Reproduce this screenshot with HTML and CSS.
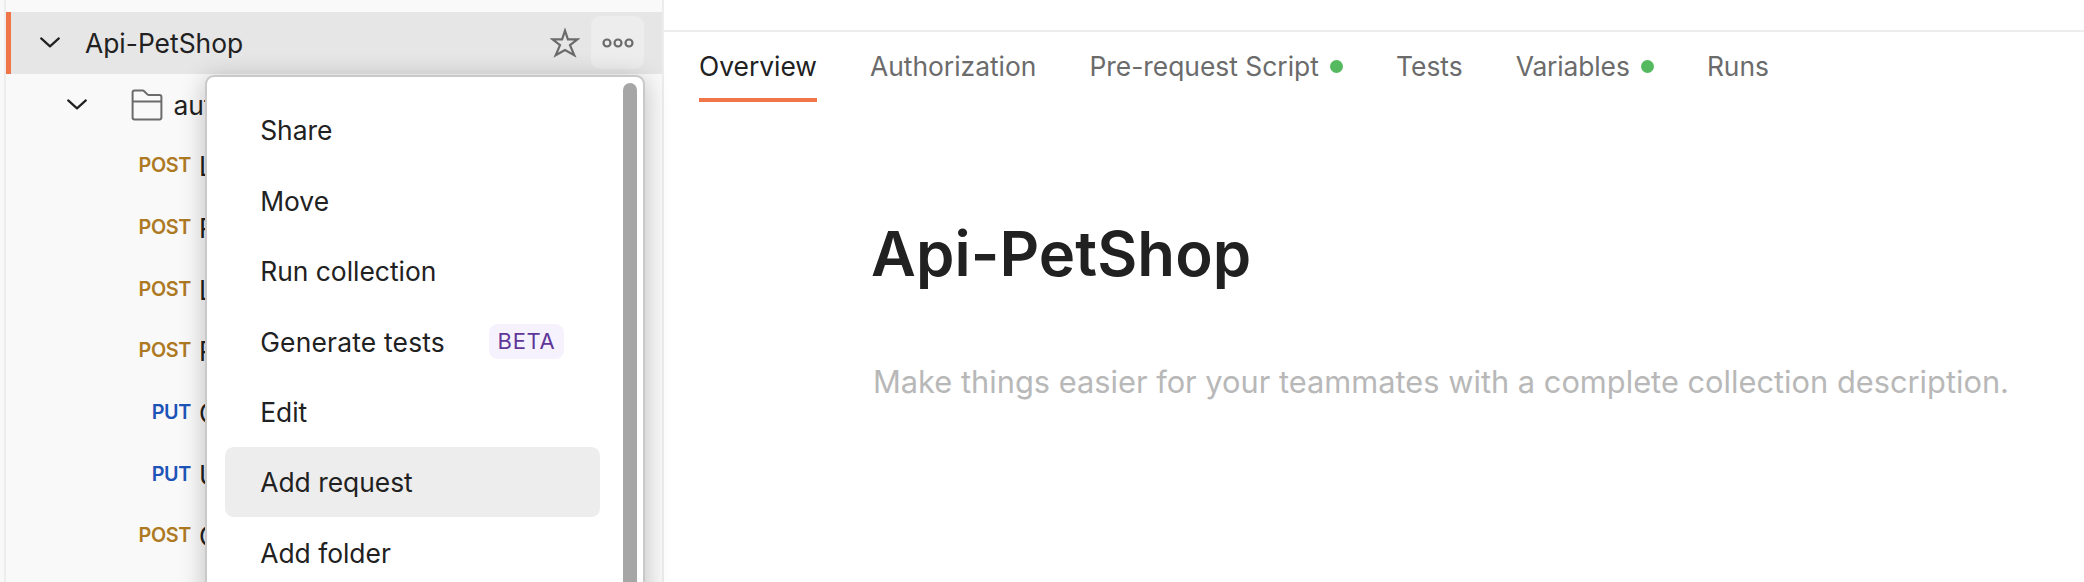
FILE: index.html
```html
<!DOCTYPE html>
<html lang="en">
<head>
<meta charset="utf-8">
<title>Api-PetShop</title>
<link rel="stylesheet" href="styles.css">
</head>
<body>
<div class="app">
  <aside class="sidebar">
    <div class="row row-collection">
      <svg class="chevron" width="20" height="12" viewBox="0 0 20 12"><path d="M1.2 1.4 10 9.4 18.8 1.4"/></svg>
      <span class="name">Api-PetShop</span>
      <svg class="star" width="30" height="30" viewBox="0 0 30 30"><path d="M15 2.6 17.9 11.4H27.4L20 17.1 24.3 27.2 15 22 5.7 27.2 10 17.1 2.6 11.4H12.1Z"/></svg>
      <button class="more" aria-label="More actions">
        <svg width="32" height="10" viewBox="0 0 32 10"><circle cx="5" cy="5" r="3.5"/><circle cx="16" cy="5" r="3.5"/><circle cx="27" cy="5" r="3.5"/></svg>
      </button>
    </div>
    <div class="row row-folder">
      <svg class="chevron" width="20" height="12" viewBox="0 0 20 12"><path d="M1.2 1.4 10 9.4 18.8 1.4"/></svg>
      <svg class="folder" width="32" height="32" viewBox="0 0 32 32"><path d="M1.6 28.6V3.4Q1.6 1.6 3.4 1.6H11.8Q12.6 1.6 13.2 2.2L16.4 5.4Q17 6 17.8 6H28.6Q30.4 6 30.4 7.8V28.6Q30.4 30.4 28.6 30.4H3.4Q1.6 30.4 1.6 28.6ZM1.6 12.6H30.4"/></svg>
      <span class="name">aut</span>
    </div>
    <div class="row row-request"><span class="method post">POST</span><span class="name">L</span></div>
    <div class="row row-request"><span class="method post">POST</span><span class="name">R</span></div>
    <div class="row row-request"><span class="method post">POST</span><span class="name">L</span></div>
    <div class="row row-request"><span class="method post">POST</span><span class="name">R</span></div>
    <div class="row row-request"><span class="method put">PUT</span><span class="name">C</span></div>
    <div class="row row-request"><span class="method put">PUT</span><span class="name">U</span></div>
    <div class="row row-request"><span class="method post">POST</span><span class="name">C</span></div>
  </aside>
  <main class="main">
    <div class="topbar"></div>
    <nav class="tabs">
      <a class="tab active">Overview</a>
      <a class="tab">Authorization</a>
      <a class="tab">Pre-request Script<i class="dot"></i></a>
      <a class="tab">Tests</a>
      <a class="tab variables">Variables<i class="dot"></i></a>
      <a class="tab">Runs</a>
    </nav>
    <section class="content">
      <h1 class="title">Api-PetShop</h1>
      <p class="description">Make things easier for your teammates with a complete collection description.</p>
    </section>
  </main>
  <div class="menu">
    <div class="items">
      <div class="item">Share</div>
      <div class="item">Move</div>
      <div class="item">Run collection</div>
      <div class="item generate">Generate tests<span class="badge">BETA</span></div>
      <div class="item">Edit</div>
      <div class="item hover">Add request</div>
      <div class="item">Add folder</div>
    </div>
    <div class="scrollbar"></div>
  </div>
</div>
</body>
</html>
```
FILE: styles.css
```css
* { box-sizing: border-box; }
body {
  margin: 0;
  background: #fff;
  color: #212121;
  font-family: Inter, "Liberation Sans", sans-serif;
  font-size: 26.4px;
}
.app {
  position: relative;
  display: flex;
  width: 2084px;
  height: 582px;
  overflow: hidden;
}
svg { fill: none; flex: none; }

.sidebar {
  flex: none;
  width: 664px;
  height: 582px;
  padding-top: 12px;
  overflow: hidden;
  background: #f9f9f9;
  border-right: 2px solid #ededed;
  background-image: linear-gradient(#ededed, #ededed);
  background-size: 2px 100%;
  background-position: 4px 0;
  background-repeat: no-repeat;
}
.row {
  display: flex;
  align-items: center;
  height: 61.7px;
  margin-left: 6px;
}
.row-collection {
  background: #e6e6e6;
  border-left: 5px solid #f0764a;
  padding: 0 18px 0 29px;
}
.chevron { stroke: #212121; stroke-width: 2.2; stroke-linecap: round; stroke-linejoin: round; }
.row-collection .name { margin-left: 25px; }
.star { margin-left: auto; stroke: #6b6b6b; stroke-width: 2.2; }
.more {
  display: flex;
  align-items: center;
  justify-content: center;
  width: 53px;
  height: 53px;
  margin-left: 11.5px;
  padding: 0;
  border: 0;
  border-radius: 9px;
  background: #ededed;
}
.more svg { stroke: #6b6b6b; stroke-width: 2.2; }
.row-folder { padding-left: 60.5px; }
.folder { margin-left: 44px; stroke: #6b6b6b; stroke-width: 2; }
.row-folder .name { margin-left: 11px; }
.method {
  width: 185px;
  padding-bottom: 2px;
  text-align: right;
  font-size: 19.8px;
  font-weight: 600;
  letter-spacing: -0.35px;
}
.row-request .name { margin-left: 8px; }
.post { color: #ad7a23; }
.put { color: #1d54b8; }

.main { flex: 1; min-width: 0; }
.topbar { height: 32px; border-bottom: 2px solid #ededed; }
.tabs {
  display: flex;
  gap: 53px;
  height: 70px;
  padding-left: 35px;
}
.tab {
  display: flex;
  align-items: center;
  height: 70px;
  padding-top: 2px;
  color: #6b6b6b;
  border-bottom: 4px solid transparent;
}
.active { color: #212121; border-bottom-color: #f0764a; }
.variables { letter-spacing: -0.12px; }
.dot { width: 13.2px; height: 13.2px; margin: 1px 0 0 11px; border-radius: 50%; background: #55b95f; }
.content { padding: 114px 0 0 207px; }
.title { margin: 0; font-size: 61.6px; line-height: 76px; font-weight: 600; letter-spacing: 0.1px; }
.description { margin: 68px 0 0 2px; font-size: 30.8px; line-height: 44px; color: #b8b8b8; white-space: nowrap; }

/* Context menu that floats over the collection tree */
.menu {
  position: absolute;
  left: 205px;
  top: 75px;
  display: flex;
  width: 440px;
  height: 700px;
  padding: 18px 0 0 18px;
  border: 2px solid #c9c9c9;
  border-radius: 9px;
  background: #fff;
  box-shadow: 0 4px 26px rgba(0, 0, 0, 0.24);
}
.items { width: 375px; }
.item {
  display: flex;
  align-items: center;
  height: 70.4px;
  padding-left: 35.2px;
  border-radius: 8.8px;
}
.hover { background: #ededed; }
.generate { padding-top: 1px; letter-spacing: 0.2px; }
.badge {
  width: 75px;
  height: 35px;
  margin: 0 36px 1px auto;
  border-radius: 8.8px;
  background: #f5f2fe;
  color: #603698;
  font-size: 22px;
  line-height: 35px;
  letter-spacing: 0.7px;
  text-align: center;
}
.scrollbar {
  width: 14px;
  height: 640px;
  margin: -12px 0 0 23px;
  border-radius: 7px;
  background: #a6a6a6;
}
```
